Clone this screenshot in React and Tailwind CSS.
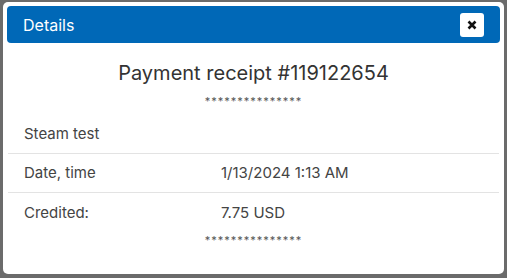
import React from "react";

const rows = [
  { label: "Date, time", value: "1/13/2024 1:13 AM" },
  { label: "Credited:", value: "7.75 USD" },
];

const App = () => {
  return (
    <div
      className="w-[507px] h-[278px] bg-[#6b6b6b] pt-[2px] px-[3px] pb-[4px]"
      style={{ fontFamily: "Inter, 'Noto Sans', sans-serif" }}
    >
      <div className="h-full bg-white rounded-[5px] p-[4px] flex flex-col">
        <div className="h-[37px] bg-[#0068b7] rounded-[4px] flex items-center justify-between pl-[16px] pr-[16px]">
          <span className="text-white text-[16px]">Details</span>
          <button className="w-[24px] h-[24px] bg-white rounded-[3px] flex items-center justify-center">
            <svg width="10" height="10" viewBox="0 0 10 10">
              <path d="M1.5 1.5 L8.5 8.5 M8.5 1.5 L1.5 8.5" stroke="#111" strokeWidth="2.6" strokeLinecap="butt" />
            </svg>
          </button>
        </div>

        <h2 className="mt-[18px] text-center text-[20px] leading-[24px] font-normal text-[#333]">
          Payment receipt #119122654
        </h2>
        <div className="mt-[9px] text-center text-[11px] leading-[14px] tracking-[1px] text-[#555]">
          ***************
        </div>

        <div className="mt-[16px] text-[15px] leading-[20px] text-[#444]">
          <div className="pl-[16px] pb-[9px] border-b border-[#e3e3e3] mx-[1px]">Steam test</div>
          {rows.map((row, i) => (
            <div
              key={row.label}
              className={`flex pl-[16px] mx-[1px] ${i === 0 ? "pt-[9px] pb-[9px] border-b border-[#e3e3e3]" : "pt-[10px]"}`}
            >
              <span className="w-[197px]">{row.label}</span>
              <span>{row.value}</span>
            </div>
          ))}
        </div>
        <div className="mt-[10px] text-center text-[11px] leading-[14px] tracking-[1px] text-[#555]">
          ***************
        </div>
      </div>
    </div>
  );
};

export default App;
